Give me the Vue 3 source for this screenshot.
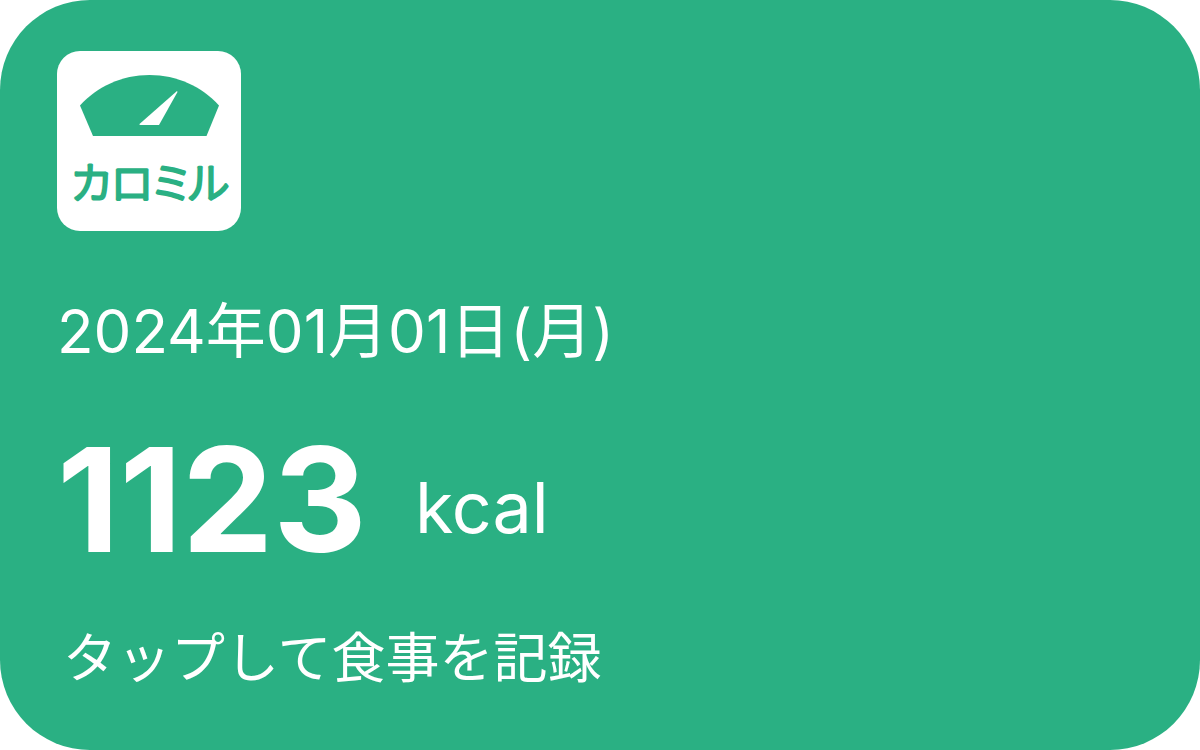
<script setup>
const date = '2024年01月01日(月)'
const calories = 1123
</script>

<template>
  <a class="widget" href="#record">
    <svg class="logo" viewBox="0 0 184 180">
      <rect class="tile" width="184" height="180" rx="23" />
      <path class="dial" d="M23 54.500C40 35.500 65 24 92.500 24S145 35.500 162 54.500L149.500 85H36Z" />
      <path class="needle" d="M120 40L82.500 73Q82 74 83.500 74H102L120.500 41Z" />
      <text class="brand" x="93" y="148" text-anchor="middle">カロミル</text>
    </svg>
    <time class="date" datetime="2024-01-01">{{ date }}</time>
    <p class="total">
      <strong class="value">{{ calories }}</strong>
      <span class="unit">kcal</span>
    </p>
    <p class="hint">タップして食事を記録</p>
  </a>
</template>

<style>
body {
  margin: 0;
  background: #fff;
}
</style>

<style scoped>
.widget {
  box-sizing: border-box;
  display: flex;
  flex-direction: column;
  align-items: flex-start;
  min-height: 100vh;
  padding: 51px 57px 40px;
  border-radius: 90px;
  background: #2ab083;
  color: #fff;
  font-family: Inter, "Noto Sans CJK JP", sans-serif;
  text-decoration: none;
}

.logo {
  width: 184px;
  height: 180px;
}

.tile,
.needle {
  fill: #fff;
}

.dial {
  fill: #2ab083;
}

.brand {
  fill: #2ab083;
  stroke: #2ab083;
  stroke-width: 3px;
  stroke-linejoin: round;
  font-family: "Noto Sans CJK JP", sans-serif;
  font-size: 43px;
  font-weight: 300;
  font-feature-settings: "palt";
}

.date {
  margin-top: 64px;
  font-size: 60px;
  line-height: 72px;
}

.total {
  display: flex;
  flex-wrap: wrap;
  align-items: flex-end;
  gap: 0 48px;
  margin: 45px 0 0;
}

.value {
  font-size: 145px;
  font-weight: 700;
  line-height: 176px;
}

.unit {
  padding-bottom: 36px;
  font-size: 70px;
  line-height: 88px;
}

.hint {
  margin: 35px 0 0 6px;
  font-size: 54px;
  line-height: 72px;
}
</style>
